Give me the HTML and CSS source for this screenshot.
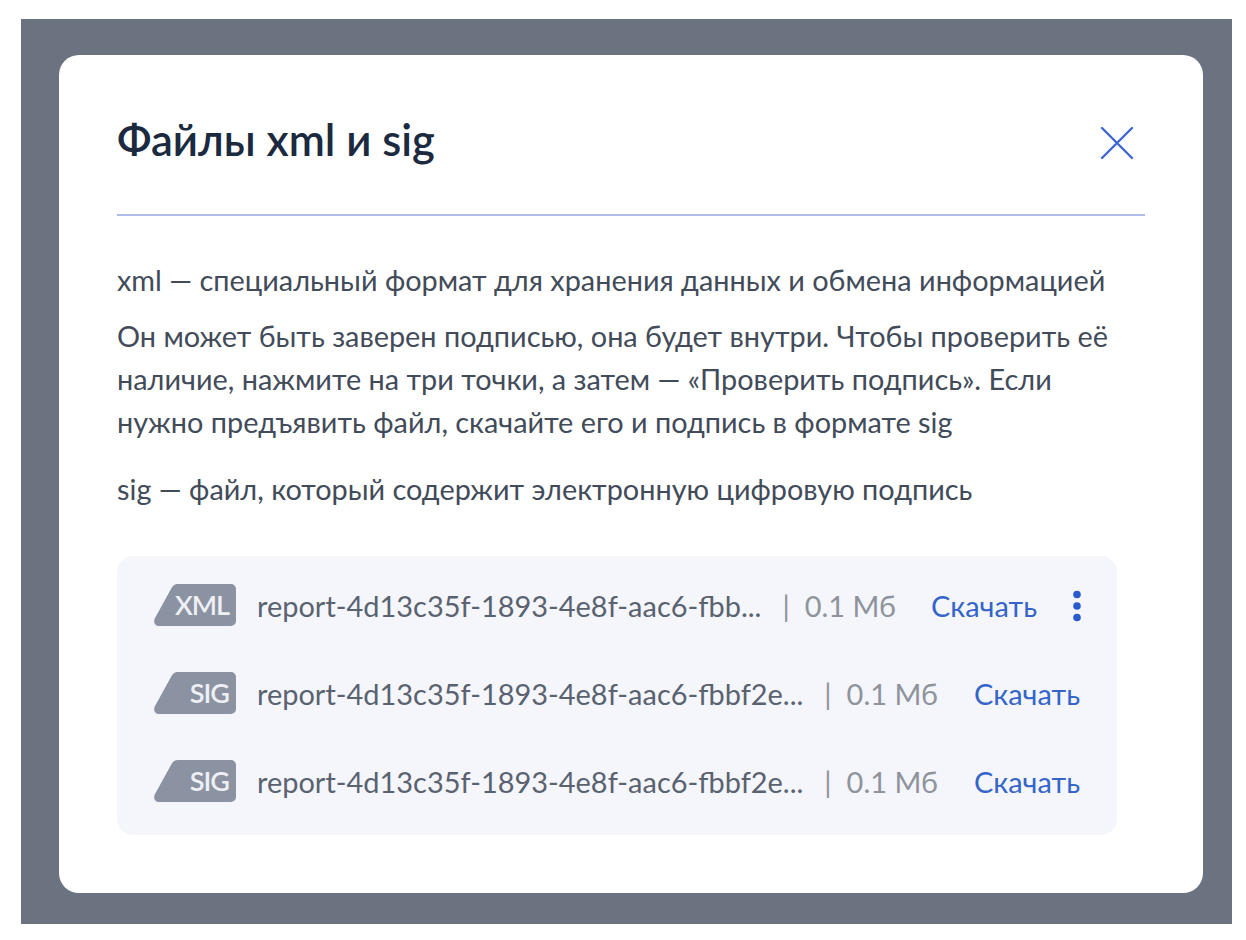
FILE: index.html
```html
<!DOCTYPE html>
<html lang="ru">
<head>
    <meta charset="UTF-8">
    <title>Файлы xml и sig</title>
    <link rel="stylesheet" href="styles.css">
</head>
<body>
    <div class="overlay">
        <div class="modal">
            <div class="modal-head">
                <h1 class="modal-title">Файлы xml и sig</h1>
                <svg class="close-icon" width="36" height="36" viewBox="0 0 36 36">
                    <path d="M3 3L33 33M33 3L3 33" fill="none" stroke="#3f66cf" stroke-width="2.4" stroke-linecap="round"/>
                </svg>
            </div>
            <div class="modal-body">
                <p class="text first">xml — специальный формат для хранения данных и обмена информацией</p>
                <p class="text second">Он может быть заверен подписью, она будет внутри. Чтобы проверить её наличие, нажмите на три точки, а затем — «Проверить подпись». Если нужно предъявить файл, скачайте его и подпись в формате sig</p>
                <p class="text third">sig — файл, который содержит электронную цифровую подпись</p>
            </div>
            <div class="files">
                <div class="file-row">
                    <span class="badge"><svg class="badge-bg" width="82" height="42" viewBox="0 0 82 42"><path d="M24 0H77a5 5 0 0 1 5 5V37a5 5 0 0 1-5 5H5C1 42 -1 38 1 34L17 5C19 1 21 0 24 0Z" fill="#8b93a3"/></svg><span class="badge-text">XML</span></span>
                    <span class="file-name">report-4d13c35f-1893-4e8f-aac6-fbb...</span>
                    <span class="file-size"><i class="sep">|</i>0.1 Мб</span>
                    <a class="download">Скачать</a>
                    <svg class="more-icon" width="10" height="32" viewBox="0 0 10 32">
                        <circle cx="5" cy="4.500" r="3.800" fill="#2a5bcc"/>
                        <circle cx="5" cy="16" r="3.800" fill="#2a5bcc"/>
                        <circle cx="5" cy="27.500" r="3.800" fill="#2a5bcc"/>
                    </svg>
                </div>
                <div class="file-row">
                    <span class="badge"><svg class="badge-bg" width="82" height="42" viewBox="0 0 82 42"><path d="M24 0H77a5 5 0 0 1 5 5V37a5 5 0 0 1-5 5H5C1 42 -1 38 1 34L17 5C19 1 21 0 24 0Z" fill="#8b93a3"/></svg><span class="badge-text">SIG</span></span>
                    <span class="file-name">report-4d13c35f-1893-4e8f-aac6-fbbf2e...</span>
                    <span class="file-size"><i class="sep">|</i>0.1 Мб</span>
                    <a class="download">Скачать</a>
                </div>
                <div class="file-row">
                    <span class="badge"><svg class="badge-bg" width="82" height="42" viewBox="0 0 82 42"><path d="M24 0H77a5 5 0 0 1 5 5V37a5 5 0 0 1-5 5H5C1 42 -1 38 1 34L17 5C19 1 21 0 24 0Z" fill="#8b93a3"/></svg><span class="badge-text">SIG</span></span>
                    <span class="file-name">report-4d13c35f-1893-4e8f-aac6-fbbf2e...</span>
                    <span class="file-size"><i class="sep">|</i>0.1 Мб</span>
                    <a class="download">Скачать</a>
                </div>
            </div>
        </div>
    </div>
</body>
</html>
```

FILE: styles.css
```css
html, body {
    margin: 0;
    padding: 0;
}
body {
    background-color: #fff;
    font-family: Lato, "Open Sans", "Noto Sans", sans-serif;
    padding: 19px 14px 16px 21px;
}
.overlay {
    background-color: #6b7380;
    height: 905px;
    padding: 36px 29px 31px 38px;
    box-sizing: border-box;
}
.modal {
    background-color: #fff;
    border-radius: 20px;
    height: 838px;
    padding: 0 58px;
    box-sizing: border-box;
}
.modal-head {
    height: 161px;
    border-bottom: 2px solid #aebde8;
    box-sizing: border-box;
    display: flex;
    justify-content: space-between;
    align-items: flex-start;
}
.modal-title {
    margin: 53px 0 0;
    font-size: 43.500px;
    line-height: 62px;
    font-weight: 600;
    color: #1b2a3f;
}
.close-icon {
    margin: 70px 10px 0 0;
}
.modal-body {
    max-width: 1000px;
}
.text {
    margin: 0;
    font-size: 28.850px;
    line-height: 43px;
    color: #424b59;
}
.first { margin-top: 43px; }
.second { margin-top: 13px; }
.third { margin-top: 24px; }
.files {
    margin-top: 45px;
    width: 1000px;
    height: 279px;
    background-color: #f4f6fb;
    border-radius: 16px;
    padding: 5px 37px 0 37px;
    box-sizing: border-box;
}
.file-row {
    height: 88px;
    display: flex;
    align-items: center;
    font-size: 28.950px;
}
.badge {
    position: relative;
    width: 82px;
    height: 42px;
    flex: none;
}
.badge-bg {
    display: block;
}
.badge-text {
    position: absolute;
    right: 7px;
    top: 0;
    line-height: 41px;
    font-size: 27px;
    font-weight: 600;
    letter-spacing: -1px;
    color: #eef0f4;
}
.file-name {
    margin-left: 21px;
    color: #5a6270;
    white-space: nowrap;
}
.file-size {
    margin-left: 21px;
    color: #8e939c;
    white-space: nowrap;
}
.sep {
    font-style: normal;
    margin-right: 15px;
}
.download {
    margin-left: auto;
    color: #3565c9;
}
.more-icon {
    margin-left: 35px;
    margin-right: -2px;
    margin-top: 2px;
}
```
